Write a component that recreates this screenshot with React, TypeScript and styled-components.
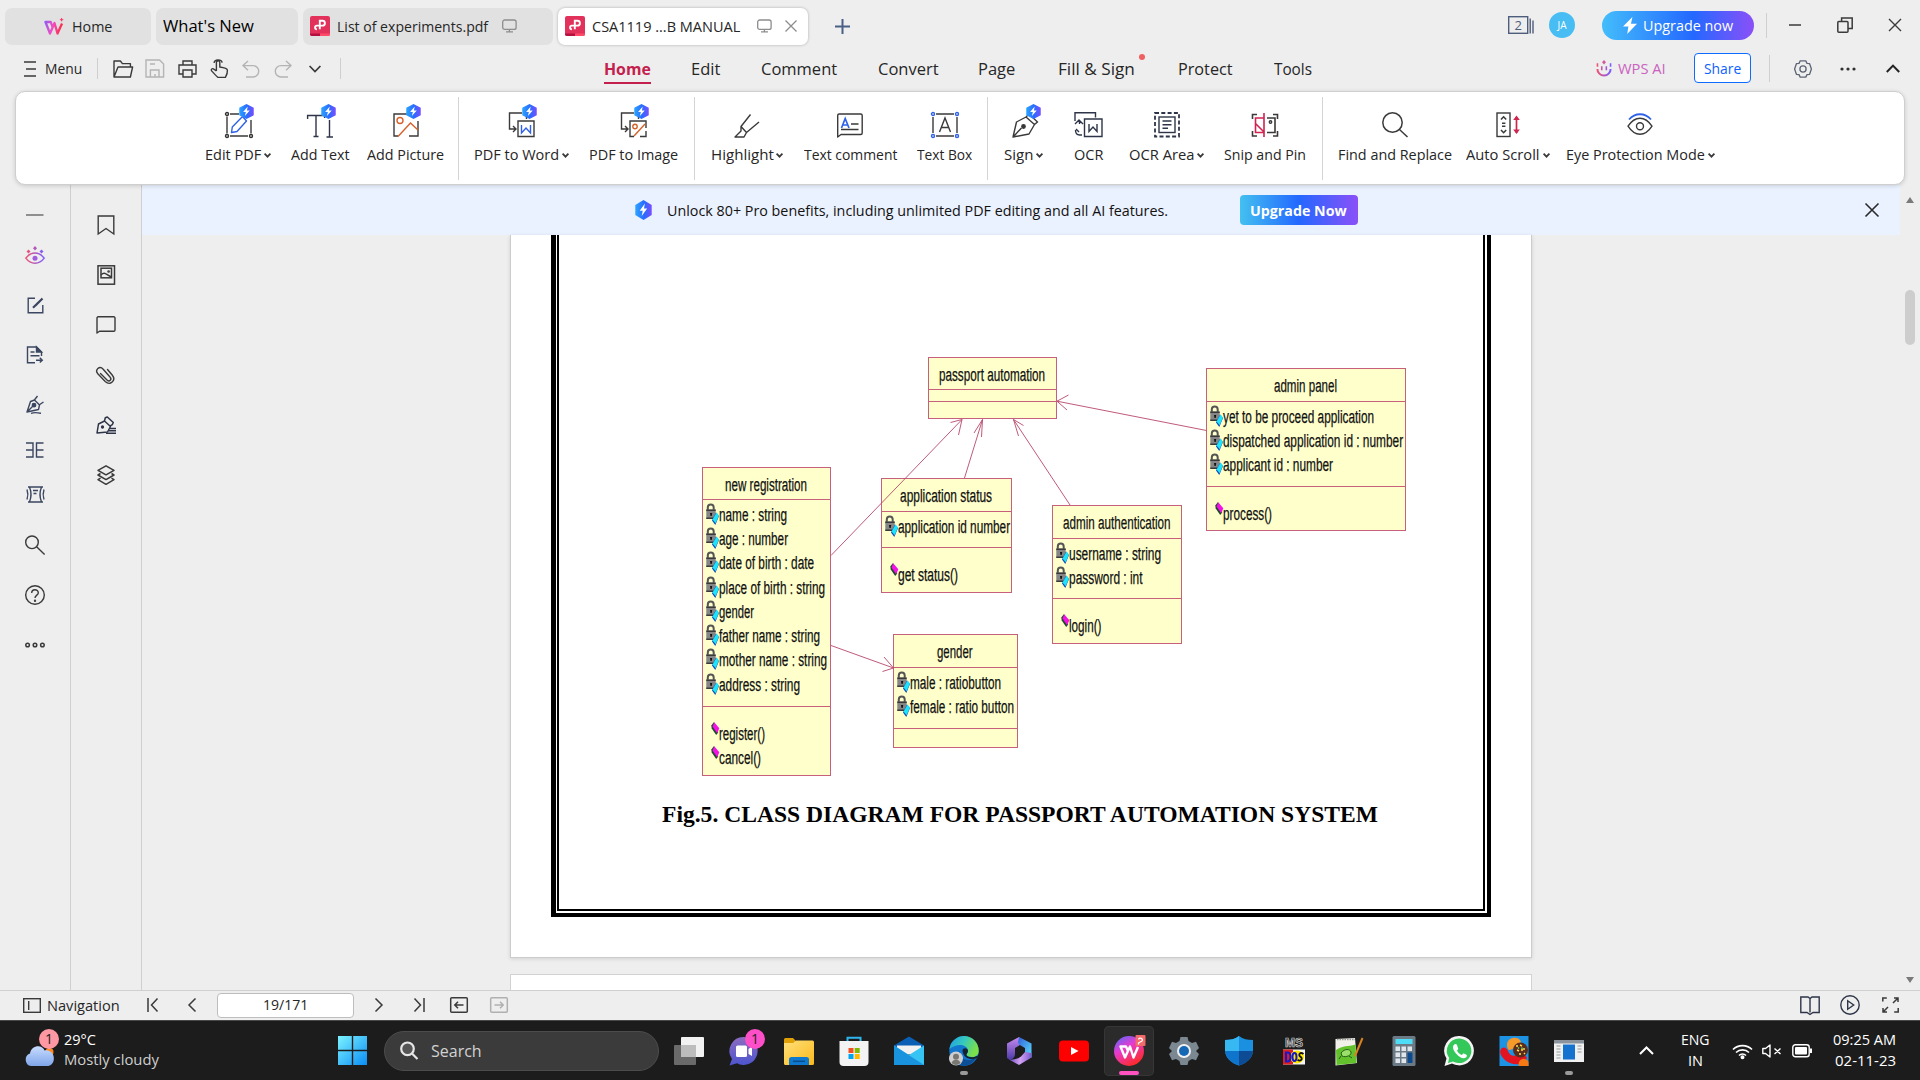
import React, { ReactNode, useLayoutEffect, useRef, useState } from 'react';
import styled, { createGlobalStyle } from 'styled-components';

const Global = createGlobalStyle`
  * { box-sizing: border-box; }
  html, body { margin: 0; padding: 0; overflow: hidden; background: #eeeeee; }
  body { font-family: "Open Sans", "Noto Sans", sans-serif; color: #262626; }
  svg { display: block; flex: none; overflow: visible; }
`;

/* ---------- text with a fixed run length ---------- */

const Run = styled.span<{ $w: number }>`
  display: block;
  flex: none;
  width: ${p => p.$w}px;
  white-space: nowrap;
`;
const RunInner = styled.span`
  display: inline-block;
  white-space: pre;
  transform-origin: 0 50%;
`;

function Fit({ w, children }: { w: number; children: ReactNode }) {
  const ref = useRef<HTMLSpanElement>(null);
  const [scale, setScale] = useState(1);
  useLayoutEffect(() => {
    if (ref.current && ref.current.offsetWidth) setScale(w / ref.current.offsetWidth);
  }, [w, children]);
  return (
    <Run $w={w}>
      <RunInner ref={ref} style={{ transform: `scaleX(${scale})` }}>{children}</RunInner>
    </Run>
  );
}

/* ---------- icon helper ---------- */

type IconProps = { w: number; h: number; c?: string; s?: number; children: ReactNode };
function Ic({ w, h, c = '#3a3a3a', s = 1.4, children }: IconProps) {
  return (
    <svg width={w} height={h} viewBox={`0 0 ${w} ${h}`} fill="none" stroke={c} strokeWidth={s}>
      {children}
    </svg>
  );
}

const GradientSheet = styled.svg`
  position: absolute;
`;

function Gradients() {
  return (
    <GradientSheet width="0" height="0">
      <defs>
        <linearGradient id="pro" x1="0" x2="1" y1="0" y2="0"><stop offset="0" stopColor="#2ba5ff" /><stop offset=".55" stopColor="#2a6bff" /><stop offset="1" stopColor="#7a4dff" /></linearGradient>
        <linearGradient id="wps" gradientUnits="userSpaceOnUse" x1="0" x2="20" y1="0" y2="5"><stop offset="0" stopColor="#7a5cff" /><stop offset=".5" stopColor="#f04fc4" /><stop offset="1" stopColor="#ff2a3c" /></linearGradient>
        <linearGradient id="wpsDisc" x1="0" x2=".6" y1="0" y2="1"><stop offset="0" stopColor="#4a6cff" /><stop offset=".45" stopColor="#e53bd0" /><stop offset="1" stopColor="#ff2a2a" /></linearGradient>
        <linearGradient id="eye" x1="0" x2="1" y1="0" y2="0"><stop offset="0" stopColor="#ee5572" /><stop offset="1" stopColor="#7c5cff" /></linearGradient>
        <linearGradient id="win" gradientUnits="userSpaceOnUse" x1="0" x2="29" y1="0" y2="29"><stop offset="0" stopColor="#7cf3ff" /><stop offset="1" stopColor="#0a8df5" /></linearGradient>
        <linearGradient id="cloud" x1="0" x2="0" y1="0" y2="1"><stop offset="0" stopColor="#c9dcff" /><stop offset="1" stopColor="#7fa6ea" /></linearGradient>
        <linearGradient id="chat" x1="0" x2="0" y1="0" y2="1"><stop offset="0" stopColor="#8d6bc0" /><stop offset="1" stopColor="#4c55cf" /></linearGradient>
        <linearGradient id="folder" x1="0" x2="1" y1="0" y2="1"><stop offset="0" stopColor="#ffe07a" /><stop offset="1" stopColor="#fbb91c" /></linearGradient>
        <linearGradient id="edgeTop" x1="0" x2="1" y1="0" y2=".4"><stop offset="0" stopColor="#1c9be8" /><stop offset=".5" stopColor="#35c8c0" /><stop offset="1" stopColor="#7be04a" /></linearGradient>
        <linearGradient id="hexA" x1="0" x2="0" y1="0" y2="1"><stop offset="0" stopColor="#c88af0" /><stop offset="1" stopColor="#4a3aa8" /></linearGradient>
        <linearGradient id="hexB" x1="0" x2="1" y1="0" y2="1"><stop offset="0" stopColor="#2f5fd8" /><stop offset="1" stopColor="#5fe0ff" /></linearGradient>
        <linearGradient id="hexC" x1="0" x2="1" y1="0" y2="0"><stop offset="0" stopColor="#6a4cc0" /><stop offset=".5" stopColor="#d3a2f4" /><stop offset="1" stopColor="#7a58cc" /></linearGradient>
      </defs>
    </GradientSheet>
  );
}

const bolt = 'M8.4 2.6L4 8h2.6l-.9 4 4.7-5.6H7.7z';

/* ---------- title bar ---------- */

const Screen = styled.div`
  width: 1920px;
  height: 1080px;
  display: flex;
  flex-direction: column;
  background: #eeeeee;
  overflow: hidden;
`;
const TitleBar = styled.header`
  height: 53px;
  flex: none;
  display: flex;
  align-items: center;
  padding-left: 5px;
  font-size: 15px;
`;
const Tab = styled.div<{ $w: number; $pad: number; $active?: boolean; $gap?: number }>`
  width: ${p => p.$w}px;
  height: 37px;
  margin-right: ${p => p.$gap ?? 5}px;
  padding: 0 0 1px ${p => p.$pad}px;
  display: flex;
  align-items: center;
  border-radius: 7px;
  background: ${p => (p.$active ? '#ffffff' : '#e1e1e1')};
  box-shadow: ${p => (p.$active ? '0 0 3px rgba(0,0,0,.28)' : 'none')};
`;
const Gap = styled.i<{ $w: number }>`
  flex: 0 0 ${p => p.$w}px;
`;
const Grow = styled.i`
  flex: 1;
`;
const NewTitle = styled.span`
  font-size: 16px;
  color: #000;
`;
const WindowTools = styled.div`
  display: flex;
  align-items: center;
  height: 32px;
  margin-top: -3px;
`;
const Avatar = styled.span`
  width: 26px;
  height: 26px;
  border-radius: 50%;
  background: #47bdf3;
  color: #fff;
  font-size: 10px;
  display: flex;
  align-items: center;
  justify-content: center;
`;
const UpgradePill = styled.span`
  width: 152px;
  height: 29px;
  border-radius: 15px;
  display: flex;
  align-items: center;
  padding-left: 20px;
  color: #fff;
  font-size: 15px;
  background: linear-gradient(90deg, #43bdfb, #2468ff 60%, #8a50f8);
`;
const VLine = styled.i<{ $h: number }>`
  flex: 0 0 1px;
  height: ${p => p.$h}px;
  background: #cfcfcf;
`;

const PdfLogo = () => (
  <svg width="20" height="20" viewBox="0 0 20 20">
    <rect width="20" height="20" rx="2" fill="#e2325c" />
    <path d="M0 17.6h10V20H2a2 2 0 0 1-2-2z" fill="#b5103f" />
    <path d="M10 17.6h10V18a2 2 0 0 1-2 2h-8z" fill="#ff4a68" />
    <path d="M9.800 13.200V4.800h2.700a2.400 2.400 0 0 1 0 4.800H6.900a1.800 1.800 0 0 0 0 3.600" fill="none" stroke="#fff" strokeWidth="1.900" />
  </svg>
);
const Monitor = () => (
  <Ic w={15} h={14} c="#8d8d8d" s={1.3}><rect x=".7" y="1" width="13.4" height="9.4" rx="2" /><path d="M7.4 10.4v2.4M4 12.8h7" /></Ic>
);

function TopBar() {
  return (
    <TitleBar>
      <Tab $w={146} $pad={39}>
        <svg width="20" height="17" viewBox="0 0 20 17" fill="none" stroke="url(#wps)" strokeWidth="2.300" strokeLinejoin="round">
          <path d="M8.500 9L6.800 4H1.500L6 15.500 10.500 5l3 10.500L18 5.500" /><path d="M17.600 0v3.400M15.900 1.700h3.400" strokeWidth="1" />
        </svg>
        <Gap $w={8} /><Fit w={40}>Home</Fit>
      </Tab>
      <Tab $w={142} $pad={7}><NewTitle><Fit w={91}>What's New</Fit></NewTitle></Tab>
      <Tab $w={250} $pad={7} $gap={5}>
        <PdfLogo /><Gap $w={7} /><Fit w={151}>List of experiments.pdf</Fit><Gap $w={14} /><Monitor />
      </Tab>
      <Tab $w={250} $pad={7} $active $gap={27}>
        <PdfLogo /><Gap $w={7} /><Fit w={148}>CSA1119 ...B MANUAL</Fit><Gap $w={17} /><Monitor /><Gap $w={13} />
        <Ic w={12} h={12} c="#8d8d8d" s={1.3}><path d="M.5.5l11 11M11.5.5l-11 11" /></Ic>
      </Tab>
      <Ic w={15} h={15} c="#4a5f86" s={2}><path d="M7.5 0v15M0 7.5h15" /></Ic>
      <Grow />
      <WindowTools>
        <Ic w={26} h={18} c="#4e5d7c"><rect x=".7" y=".7" width="19" height="16.6" /><path d="M22.2 2.4v15M25 4.4v13" />
          <text x="10.2" y="13.6" fontSize="13" textAnchor="middle" fill="#4e5d7c" stroke="none">2</text></Ic>
        <Gap $w={15} />
        <Avatar>JA</Avatar><Gap $w={27} />
        <UpgradePill>
          <svg width="16" height="17" viewBox="0 0 16 17" fill="#fff"><path d="M10.4 0L1 9.6h5.4L5.2 17 15 6.8H9z" /></svg>
          <Gap $w={5} /><Fit w={90}>Upgrade now</Fit>
        </UpgradePill>
        <Gap $w={12} /><VLine $h={25} /><Gap $w={22} />
        <Ic w={12} h={16} s={1.5}><path d="M0 8h12" /></Ic><Gap $w={36} />
        <Ic w={16} h={16} s={1.5}><path d="M4.6 4V1h10.6v10.6H11" /><rect x=".8" y="4.4" width="10.2" height="10.8" rx="1" /></Ic>
        <Gap $w={36} />
        <Ic w={12} h={12} s={1.4}><path d="M0 0l12 12M12 0L0 12" /></Ic><Gap $w={19} />
      </WindowTools>
    </TitleBar>
  );
}

/* ---------- menu row ---------- */

const MenuRow = styled.nav`
  height: 31px;
  flex: none;
  display: flex;
  align-items: center;
  padding-left: 24px;
  font-size: 15px;
`;
const TextUp = styled.span`
  margin-top: -2px;
`;
const NavItem = styled.span<{ $gap: number; $active?: boolean }>`
  position: relative;
  margin-left: ${p => p.$gap}px;
  height: 31px;
  line-height: 31px;
  font-size: 16.5px;
  font-weight: ${p => (p.$active ? 700 : 400)};
  color: ${p => (p.$active ? '#c4204d' : '#262626')};
  border-bottom: ${p => (p.$active ? '2px solid #c4204d' : 'none')};
`;
const RedDot = styled.i`
  position: absolute;
  right: -10px;
  top: 1px;
  width: 6px;
  height: 6px;
  border-radius: 50%;
  background: #f06060;
`;
const AiLabel = styled.span`
  margin-top: -2px;
  font-size: 15px;
  color: #ca62bf;
`;
const ShareButton = styled.span`
  width: 57px;
  height: 30px;
  margin-top: -1px;
  border: 1.5px solid #0d6bff;
  border-radius: 4px;
  background: #fff;
  color: #0d5fff;
  display: flex;
  align-items: center;
  justify-content: center;
`;

const navItems: [string, number, number][] = [
  ['Home', 263, 47], ['Edit', 40, 29], ['Comment', 41, 76], ['Convert', 41, 61], ['Page', 39, 37],
  ['Fill & Sign', 43, 77], ['Protect', 43, 55], ['Tools', 41, 38],
];

function Menu() {
  return (
    <MenuRow>
      <Ic w={12} h={16} s={1.5}><path d="M0 1h12M2 8h10M0 15h12" /></Ic>
      <Gap $w={9} /><TextUp><Fit w={37}>Menu</Fit></TextUp><Gap $w={15} /><VLine $h={21} /><Gap $w={15} />
      <Ic w={20} h={18}><path d="M1 17V1h6.4l2 2.6h8V7M1 17L5 7h14.600L17.400 17z" strokeLinejoin="round" /></Ic><Gap $w={12} />
      <Ic w={20} h={19} c="#b4b4b4"><path d="M1 1h13.6L18.6 5v13H1zM5.4 18v-7h8.6v7M5 5h5M10 18v-3" /></Ic><Gap $w={13} />
      <Ic w={19} h={18}><path d="M5 5V1h9v4M5 14H1V5h17v9h-4" /><path d="M5 10h9v7H5z" /></Ic><Gap $w={13} />
      <Ic w={19} h={19}><path d="M6.4 12V3.6a1.7 1.7 0 0 1 3.4 0V8c3 .4 7.4 1 7.6 3.2.2 2.200 0 3.800-2 7.200H8C6 16.600 3.600 14 1.400 11.600c-.6-1.800 1.400-2.600 2.800-1.200L6.400 12M4 3.800c.6-3.800 7.200-4 8.200-.2" /></Ic><Gap $w={13} />
      <Ic w={18} h={18} c="#b4b4b4"><path d="M6 1L1 5.600l5 4.600M1 5.600h10a5.700 5.700 0 0 1 0 11.400H4" /></Ic><Gap $w={14} />
      <Ic w={18} h={18} c="#b4b4b4"><path d="M12 1l5 4.600-5 4.600M17 5.600H7A5.700 5.700 0 0 0 7 17h7" /></Ic><Gap $w={17} />
      <Ic w={12} h={8} s={1.7}><path d="M.6 1L6 6.600 11.400 1" /></Ic><Gap $w={19} /><VLine $h={21} />
      {navItems.map(([label, gap, w], i) => (
        <NavItem key={label} $gap={gap} $active={i === 0}>
          <Fit w={w}>{label}</Fit>
          {label === 'Fill & Sign' && <RedDot />}
        </NavItem>
      ))}
      <Grow />
      <Ic w={16} h={17} c="url(#eye)" s={2}>
        <path d="M1.400 9a6.600 6.600 0 0 0 13.200 0" /><path d="M5.700 7v2.600h.1V7zM10.300 7v2.600h.1V7zM1.400 4v2h.1V4zM14.500 4v2h.1V4z" strokeWidth="1.500" /><path d="M8 0l2 2.300-2 2.300-2-2.300z" fill="#d45a9a" stroke="none" />
      </Ic>
      <Gap $w={6} /><AiLabel><Fit w={48}>WPS AI</Fit></AiLabel><Gap $w={28} />
      <ShareButton><Fit w={37}>Share</Fit></ShareButton>
      <Gap $w={18} /><VLine $h={27} /><Gap $w={24} />
      <Ic w={18} h={18} c="#5c6474" s={1.3}>
        <path d="M6.200.9h5.600l1.200 2.500 2.600.3L17.400 9l-1.800 5.300-2.600.3-1.200 2.500H6.200L5 14.600l-2.600-.3L.6 9l1.800-5.300L5 3.400z" strokeLinejoin="round" /><circle cx="9" cy="9" r="3.100" />
      </Ic>
      <Gap $w={28} />
      <svg width="16" height="4" fill="#2f2f2f"><circle cx="2" cy="2" r="1.600" /><circle cx="8" cy="2" r="1.600" /><circle cx="14" cy="2" r="1.600" /></svg>
      <Gap $w={30} />
      <Ic w={14} h={9} s={2} c="#222"><path d="M.8 8L7 1.600 13.200 8" /></Ic><Gap $w={20} />
    </MenuRow>
  );
}

/* ---------- ribbon ---------- */

const RibbonBar = styled.section`
  position: relative;
  z-index: 2;
  height: 94px;
  flex: none;
  margin: 7px 15px 0;
  display: flex;
  background: #fff;
  border: 1px solid #cfcfcf;
  border-radius: 10px;
  box-shadow: 0 1px 4px rgba(0, 0, 0, 0.16);
`;
const Tool = styled.div<{ $gap: number; $w: number }>`
  margin-left: ${p => p.$gap}px;
  width: ${p => p.$w}px;
  padding-top: 19px;
  display: flex;
  flex-direction: column;
  align-items: center;
  font-size: 14.5px;
`;
const ToolIcon = styled.span<{ $dx: number }>`
  position: relative;
  width: 28px;
  height: 28px;
  margin-left: ${p => p.$dx * 2}px;
`;
const ProBadge = styled.span`
  position: absolute;
  left: 14px;
  top: -7px;
`;
const ToolLabel = styled.span`
  display: flex;
  align-items: center;
  gap: 3px;
  margin-top: 6px;
  line-height: 20px;
`;
const Divider = styled.i<{ $gap: number }>`
  flex: 0 0 1px;
  margin: 5px 0 4px ${p => p.$gap}px;
  background: #d4d4d4;
`;

const Hex = ({ w = 15, h = 15 }: { w?: number; h?: number }) => (
  <svg width={w} height={h} viewBox="0 0 14.500 15" preserveAspectRatio="none">
    <path d="M7.250 0l7 3.800v7.400l-7 3.800-7-3.800V3.800z" fill="url(#pro)" /><path d={bolt} fill="#fff" />
  </svg>
);

const B = '#2f62e8';
const O = '#d4622c';
const N = '#2e3548';
const corners = (c: string) => (
  <g stroke={c}><circle cx="2" cy="3" r="1.500" /><circle cx="26" cy="3" r="1.500" /><circle cx="2" cy="25" r="1.500" /><circle cx="26" cy="25" r="1.500" /></g>
);
const art: Record<string, ReactNode> = {
  edit: <Ic w={28} h={28}>{corners('#333')}<path d="M5 3h9M2 5.500v17M5 25h18M26 9v13.500" /><path d="M6.500 21.500l.8-5.500L17.500 5.500l4 4.500L12 20.500z" stroke={B} strokeLinejoin="round" /></Ic>,
  text: <Ic w={28} h={28} c={N}><path d="M.6 8V4.500h17V7M9 4.500v21M6.500 25.500h5M22.500 9v17M19.500 26h6.500M18 4.500h3" /></Ic>,
  picture: <Ic w={28} h={28}><path d="M15 3H2v22h4M26 10v15h-9" /><circle cx="8" cy="9.500" r="3" stroke={O} /><path d="M6 25.500L18.500 12l7.500 7" stroke={O} /></Ic>,
  word: <Ic w={28} h={28}><path d="M14 2H1.500v16H8M5 15l3 3-3 3M18 2h.5v6M10 10h16v15.500H10z" /><path d="M13.500 14v8l4.500-5 4.500 5v-8" stroke={B} /></Ic>,
  image: <Ic w={28} h={28}><path d="M14 2H1.500v16H8M5 15l3 3-3 3M18 2h.5v6M26 17v-7H10v15.500h4M20 25.500h6V20" /><circle cx="15" cy="15.500" r="2.200" stroke={O} /><path d="M14 25l11-12" stroke={O} /></Ic>,
  highlight: <Ic w={28} h={28}><path d="M17.500 3.500L8 15.500l5.500 6L26 11M8 15.500v4.500L2 26h9l2.500-4.500" strokeLinejoin="round" /></Ic>,
  comment: <Ic w={28} h={28}><path d="M1.700 26V4.500a1.500 1.500 0 0 1 1.500-1.500h21.500a1.500 1.500 0 0 1 1.500 1.500V22a1.500 1.500 0 0 1-1.500 1.500H5z" strokeLinejoin="round" /><path d="M5.500 17l3.700-9.500L13 17M7 14h4.500" stroke={B} strokeWidth="1.700" /><path d="M15 13h7.500M5 18.500h17.500" /></Ic>,
  box: <Ic w={28} h={28}>{corners(B)}<path d="M5 3h18M5 25h18M2 6v16M26 6v16M8.500 21L14 7l5.500 14M10.500 16.500h7" /></Ic>,
  sign: <Ic w={28} h={28}><path d="M1 26l3.500-15L14 6l8.500 7.500L17 23 1 26l8.500-9M14 6l3-3 8.500 8-3 2.500" strokeLinejoin="round" /><circle cx="11.500" cy="15.500" r="1.700" fill="#333" /></Ic>,
  ocr: <Ic w={28} h={28} c={N}><path d="M0 10V1.700h20.500V6.500M7 24H4.500c-3 0-4-2-4-5M0 13l4-4 4 4M4.500 9.500V13M1 18l3 3M9.500 8H27v17.500H9.500z" /><path d="M14 13v7.500l4-4.500 4 4.500V13" /></Ic>,
  area: <Ic w={28} h={28} c={N}><path d="M2 2h24v23.500H2z" strokeDasharray="4 2.300" strokeWidth="1.800" /><rect x="6" y="6" width="16" height="15.500" /><path d="M9.500 10h9M9.500 13.700h9M9.500 17.300h5.500" strokeWidth="1.600" /></Ic>,
  snip: <Ic w={28} h={28}><path d="M1.500 8V3.500H6M1.500 20v5H6M26.500 8V3.500H22M26.500 20v5H22M16 7h8v14.500h-8" strokeWidth="1.600" /><circle cx="19.500" cy="11" r="1.200" /><path d="M13 2v24M13 7H4.500v14.500H13M4.500 12.500l9 9" stroke="#cf2350" strokeWidth="1.600" /></Ic>,
  find: <Ic w={28} h={28} s={1.5}><circle cx="11.500" cy="11.500" r="9.700" /><path d="M18.500 18.500l8 7.500" /></Ic>,
  scroll: <Ic w={28} h={28}><rect x="3" y="2" width="13" height="23.500" /><path d="M7 8.500l2.600-2.700 2.600 2.700M7 19l2.600 2.700 2.600-2.700M8 12.200h3.400M8 15.200h3.400" strokeWidth="1.600" /><path d="M22.500 6v16" stroke="#d0254f" strokeWidth="1.700" /><path d="M19.200 9l3.300-4.500L25.800 9zM19.200 18.500l3.300 4.500 3.300-4.500z" fill="#d0254f" stroke="none" /></Ic>,
  eyep: <Ic w={28} h={28}><path d="M3 8.500C9 1.500 19 1.500 25 8.500" stroke={B} strokeWidth="1.800" /><path d="M2 15.200C9 4.500 19 4.500 26 15.200 19 26 9 26 2 15.200z" strokeLinejoin="round" /><circle cx="14" cy="15.300" r="3.500" /></Ic>,
};

type ToolSpec = { n: string; k: string; g: number; w: number; caret?: boolean; pro?: boolean; dx?: number };
const toolGroups: { end: number; tools: ToolSpec[] }[] = [
  { end: 14, tools: [{ n: 'Edit PDF', k: 'edit', g: 189, w: 66, caret: true, pro: true, dx: 1 }, { n: 'Add Text', k: 'text', g: 20, w: 59, pro: true, dx: 0.5 }, { n: 'Add Picture', k: 'picture', g: 16.5, w: 77, pro: true, dx: 0.5 }] },
  { end: 15.5, tools: [{ n: 'PDF to Word', k: 'word', g: 15.5, w: 95, caret: true, pro: true, dx: 0.5 }, { n: 'PDF to Image', k: 'image', g: 20, w: 89.5, pro: true, dx: 0.5 }] },
  { end: 15, tools: [{ n: 'Highlight', k: 'highlight', g: 15.5, w: 72.5, caret: true }, { n: 'Text comment', k: 'comment', g: 20.5, w: 93 }, { n: 'Text Box', k: 'box', g: 20.5, w: 55 }] },
  { end: 15.5, tools: [{ n: 'Sign', k: 'sign', g: 16, w: 39, caret: true, pro: true, dx: 2 }, { n: 'OCR', k: 'ocr', g: 31, w: 29 }, { n: 'OCR Area', k: 'area', g: 26, w: 75, caret: true }, { n: 'Snip and Pin', k: 'snip', g: 20, w: 82 }] },
  { end: 0, tools: [{ n: 'Find and Replace', k: 'find', g: 15, w: 114 }, { n: 'Auto Scroll', k: 'scroll', g: 14, w: 84, caret: true }, { n: 'Eye Protection Mode', k: 'eyep', g: 16, w: 149, caret: true }] },
];

function Ribbon() {
  return (
    <RibbonBar>
      {toolGroups.map((group, i) => (
        <React.Fragment key={i}>
          {group.tools.map(t => (
            <Tool key={t.n} $gap={t.g} $w={t.w}>
              <ToolIcon $dx={t.dx ?? 0}>{art[t.k]}{t.pro && <ProBadge><Hex /></ProBadge>}</ToolIcon>
              <ToolLabel>
                <Fit w={t.caret ? t.w - 10 : t.w}>{t.n}</Fit>
                {t.caret && <Ic w={7} h={5} s={1.8}><path d="M.6.7L3.500 3.700 6.400.7" /></Ic>}
              </ToolLabel>
            </Tool>
          ))}
          {group.end > 0 && <Divider $gap={group.end} />}
        </React.Fragment>
      ))}
    </RibbonBar>
  );
}

/* ---------- side rails ---------- */

const Workspace = styled.main`
  flex: none;
  height: 805px;
  display: flex;
  overflow: hidden;
`;
const Rail = styled.aside`
  flex: 0 0 71px;
  border-right: 1px solid #cfcfcf;
  display: flex;
  flex-direction: column;
  align-items: center;
`;
const RailItem = styled.div<{ $top: number }>`
  height: 20px;
  margin-top: ${p => p.$top}px;
  display: flex;
  align-items: center;
  justify-content: center;
`;
const L = '#3b4660';

const leftRail: [number, ReactNode][] = [
  [20, <Ic w={18} h={2} c="#8f8f8f" s={2}><path d="M0 1h17.500" /></Ic>],
  [20, <Ic w={20} h={18} c="url(#eye)"><path d="M.8 12.200c5-7 13.400-7 18.400 0-5 6.800-13.400 6.800-18.400 0z" /><circle cx="10" cy="12.200" r="2.500" fill="#a25ce0" stroke="none" /><path d="M10 0l2 2.300-2 2.300-2-2.300zM3.500 3.500l2 2-2 2-2-2zM16.500 3.500l2 2-2 2-2-2z" fill="url(#eye)" stroke="none" /></Ic>],
  [30, <Ic w={17} h={17} c={L}><path d="M8 1.200H1.200v14.600h14.600V8" /><path d="M6 10.800L15.500 1.500M8.500 8.500l7-7" strokeWidth="2.200" /></Ic>],
  [30, <Ic w={18} h={18} c={L}><path d="M9 16.800H1.500V1h9l5 5v4M4.500 6h4M4.500 9.800h9" /><path d="M10.500 1v5h5z" fill={L} /><path d="M10 14.200h6M13.800 11.800l2.500 2.400-2.500 2.400" /></Ic>],
  [30, <Ic w={18} h={18} c={L}><path d="M1 16L4.500 5.500 8.500 4l5 5-1 4.500L1 16l6-6M8 4.500L11.500 0M13 9l4.500-3M5 17.300c4-1.300 7-.6 10 0" strokeLinejoin="round" /><circle cx="8" cy="9.200" r="1.700" fill={L} /></Ic>],
  [25, <Ic w={18} h={16} c={L}><path d="M0 1h7v14H0M0 8h7M17.500 1h-7v14h7M10.500 8h7" /></Ic>],
  [24, <Ic w={19} h={17} c={L}><path d="M2 1h15M2 16h15M3.500 1c2 5 2 10 0 15M15.500 1c-2 5-2 10 0 15M1 3.500c1.200 3.500 1.200 6.500 0 10M18 3.500c-1.200 3.500-1.200 6.500 0 10M7 4.500h5M7.500 7.500h3" /></Ic>],
  [31, <Ic w={20} h={20} s={1.4}><circle cx="7" cy="7.300" r="6.300" /><path d="M11.600 11.800l8 7.800" /></Ic>],
  [30, <Ic w={20} h={20} s={1.4}><circle cx="10" cy="10" r="9.300" /><path d="M6.700 8c0-4.300 6.600-4.300 6.600 0 0 2-3.300 2.400-3.300 5" /><circle cx="10" cy="15.700" r=".5" /></Ic>],
  [30, <Ic w={20} h={6} s={1.5}><circle cx="2.600" cy="3" r="1.800" /><circle cx="10" cy="3" r="1.800" /><circle cx="17.400" cy="3" r="1.800" /></Ic>],
];
const rightRail: [number, ReactNode][] = [
  [30, <Ic w={18} h={20}><path d="M1.200 1h15.600v18l-7.800-5.500L1.200 19z" /></Ic>],
  [30, <Ic w={18} h={20} s={1.5}><rect x="1" y=".8" width="16.500" height="18.400" /><rect x="4" y="3.200" width="10.500" height="9.600" /><path d="M4 10c4-4 5 0 10.500 2" /><circle cx="11.600" cy="6.500" r=".6" /></Ic>],
  [30, <Ic w={20} h={18}><path d="M1 17V2a1.200 1.200 0 0 1 1.200-1.200h15.600A1.200 1.200 0 0 1 19 2v12a1.200 1.200 0 0 1-1.200 1.200H3.500z" strokeLinejoin="round" /></Ic>],
  [30, <Ic w={20} h={18}><path d="M4.500 7.500L11 14c2.500 2.300 5.300-.5 3-3L7.200 3.200C3.500-.7-1.500 3.800 1.800 7.700l7.400 7.800c5 4.600 11.300-1 7-6.500L11.500 3.500" strokeLinecap="round" /></Ic>],
  [30, <Ic w={20} h={18} c={N} s={1.5}><path d="M1 17L2.500 8 8.500 5l6 5.500-3 5.500zM8.500 5l.8-3.200 2-.8 6 5.500-1 2.200-2.500 1.500" strokeLinejoin="round" /><circle cx="6.500" cy="11" r=".9" fill={N} /><path d="M14 12.500h6M12.500 14.800h7.500M10 17.200h10" /></Ic>],
  [30, <Ic w={18} h={20} s={1.5}><path d="M9 .8l8 4.500-8 4.500-8-4.500zM3.500 8.500L1 10l8 4.600L17 10l-2.500-1.500M3.500 13.200L1 14.700 9 19.300l8-4.600-2.500-1.500" strokeLinejoin="round" /></Ic>],
];

/* ---------- document ---------- */

const Viewer = styled.div`
  flex: 0 0 1758px;
  display: flex;
  flex-direction: column;
`;
const Banner = styled.div`
  height: 50px;
  flex: none;
  display: flex;
  align-items: center;
  padding-left: 493px;
  background: #ebf2ff;
  color: #111;
  font-size: 15px;
`;
const BannerButton = styled.span`
  width: 118px;
  height: 30px;
  border-radius: 4px;
  display: flex;
  align-items: center;
  justify-content: center;
  padding-right: 1px;
  color: #fff;
  font-weight: 700;
  background: linear-gradient(90deg, #43c0f0, #2468ff 50%, #8a50f8);
`;
const Page = styled.article`
  width: 1022px;
  height: 723px;
  flex: none;
  margin-left: 368px;
  padding-left: 40px;
  background: #fff;
  border: 1px solid #cccccc;
  border-top: 0;
  box-shadow: 0 1px 4px rgba(0, 0, 0, 0.12);
`;
const NextPage = styled.article`
  flex: none;
  width: 1022px;
  height: 40px;
  margin: 16px 0 0 368px;
  background: #fff;
  border: 1px solid #d2d2d2;
`;
const OuterFrame = styled.div`
  width: 940px;
  height: 682px;
  border: solid #000;
  border-width: 0 4px 4px 5px;
  padding: 0 2px 2px 1px;
`;
const InnerFrame = styled.div`
  height: 676px;
  border: solid #000;
  border-width: 0 2px 2px;
`;
const Canvas = styled.div`
  position: relative;
  height: 565px;
`;
const Caption = styled.p`
  margin: 0 0 0 102.5px;
  font: bold 24px/28px "Liberation Serif", serif;
  color: #000;
`;

const ORIGIN = { x: 559, y: 235 };
const UmlBox = styled.div<{ $x: number; $y: number; $w: number; $h: number }>`
  position: absolute;
  left: ${p => p.$x - ORIGIN.x}px;
  top: ${p => p.$y - ORIGIN.y}px;
  width: ${p => p.$w}px;
  height: ${p => p.$h}px;
  display: flex;
  flex-direction: column;
  background: #ffffcc;
  border: 1px solid #c6607c;
  color: #111;
  font: 18px/24.300px "Liberation Sans", Arial, sans-serif;
  -webkit-text-stroke: 0.25px #111;
`;
const UmlTitle = styled.div<{ $h: number }>`
  flex: 0 0 ${p => p.$h}px;
  padding: 5px 1.5px 0 0;
  display: flex;
  justify-content: center;
  border-bottom: 1px solid #c6607c;
`;
const UmlAttrs = styled.div<{ $h: number }>`
  flex: 0 0 ${p => p.$h}px;
  padding: 2.7px 0 0 3px;
  border-bottom: 1px solid #c6607c;
`;
const UmlMethods = styled.div`
  padding: 15px 0 0 8px;
`;
const UmlRow = styled.div<{ $method?: boolean }>`
  height: 24.300px;
  display: flex;
  margin-left: ${p => (p.$method ? -0.5 : 0)}px;
`;
const UmlArrows = styled.svg`
  position: absolute;
  left: 0;
  top: 0;
`;

const Lock = () => (
  <svg width="13" height="22" viewBox="0 0 13 22">
    <path d="M1.800 9V4.500C1.800.5 7.700.5 7.700 4.500V9" fill="none" stroke="#555" strokeWidth="2" />
    <rect x=".3" y="6.500" width="9.400" height="9.500" fill="#868686" /><path d="M.3 6.500h9.400V8H.3zM.3 14.500h9.400V16H.3z" fill="#3a3a3a" />
    <path d="M4 10h2.200l-.5 3H4.500z" fill="#111" />
    <path d="M10 9.500l3 3.500-3.700 9L6 17.500z" fill="#0b49b5" /><path d="M10.600 9.500l2.400 3-3.300 7.800-3.200-3.800z" fill="#1ce4ff" />
  </svg>
);
const Diamond = () => (
  <svg width="8.500" height="14" viewBox="0 0 8.500 14">
    <path d="M3 0L.3 3.500l.4 3L5.200 13l2-2.500z" fill="#1a4a2a" /><path d="M3.200.3l5.100 6-2.100 5L1.500 4.500z" fill="#f411e6" />
  </svg>
);

type Uml = { x: number; y: number; w: number; h: number; th: number; ah: number; title: [string, number]; attrs: [string, number][]; methods: [string, number][] };
const classes: Uml[] = [
  { x: 928, y: 357, w: 129, h: 62, th: 32, ah: 12, title: ['passport automation', 106], attrs: [], methods: [] },
  {
    x: 702, y: 467, w: 129, h: 309, th: 32, ah: 207, title: ['new registration', 82],
    attrs: [['name : string', 68], ['age : number', 69], ['date of birth : date', 95], ['place of birth : string', 106], ['gender', 35], ['father name : string', 101], ['mother name : string', 108], ['address : string', 81]],
    methods: [['register()', 46], ['cancel()', 42]],
  },
  { x: 881, y: 478, w: 131, h: 115, th: 33, ah: 36, title: ['application status', 92], attrs: [['application id number', 112]], methods: [['get status()', 60]] },
  { x: 893, y: 634, w: 125, h: 114, th: 33, ah: 61, title: ['gender', 35.5], attrs: [['male : ratiobutton', 91], ['female : ratio button', 104]], methods: [] },
  { x: 1052, y: 505, w: 130, h: 139, th: 33, ah: 60, title: ['admin authentication', 107.5], attrs: [['username : string', 92], ['password : int', 73.5]], methods: [['login()', 32.5]] },
  { x: 1206, y: 368, w: 200, h: 163, th: 33, ah: 85, title: ['admin panel', 63], attrs: [['yet to be proceed application', 151], ['dispatched application id : number', 180], ['applicant id : number', 110]], methods: [['process()', 49]] },
];

function Diagram() {
  return (
    <Canvas>
      {classes.map(c => (
        <UmlBox key={c.title[0]} $x={c.x} $y={c.y} $w={c.w} $h={c.h}>
          <UmlTitle $h={c.th}><Fit w={c.title[1]}>{c.title[0]}</Fit></UmlTitle>
          <UmlAttrs $h={c.ah}>{c.attrs.map(([t, w]) => <UmlRow key={t}><Lock /><Fit w={w}>{t}</Fit></UmlRow>)}</UmlAttrs>
          <UmlMethods>{c.methods.map(([t, w]) => <UmlRow key={t} $method><Diamond /><Fit w={w}>{t}</Fit></UmlRow>)}</UmlMethods>
        </UmlBox>
      ))}
      <UmlArrows width="922" height="565" viewBox="559 235 922 565" fill="none" stroke="#b8476a" strokeWidth="0.900">
        <path d="M831 555.500L962 419.500M950.500 422.500L962 419.500 958.500 435" />
        <path d="M964.500 478L982.500 419.500M974 433L982.500 419.500 981.500 437" />
        <path d="M1070 505L1013.500 419.500M1023.500 425.500L1013.500 419.500 1018.500 436" />
        <path d="M1206.500 430.500L1057 401.200M1068.500 395L1057 401.200 1067 410" />
        <path d="M831 645.500L893.500 668M884 657L893.500 668 882.500 671.500" />
      </UmlArrows>
    </Canvas>
  );
}

const ScrollTrack = styled.div`
  flex: 0 0 20px;
  display: flex;
  flex-direction: column;
  align-items: center;
  padding-top: 12px;
`;
const Thumb = styled.i`
  flex: none;
  width: 10px;
  height: 55px;
  margin: 87px 0 632px;
  border-radius: 5px;
  background: #cdcdcd;
`;

/* ---------- status bar ---------- */

const Status = styled.footer`
  height: 30px;
  flex: none;
  display: flex;
  align-items: center;
  padding: 0 0 1px 23px;
  border-top: 1px solid #cfcfcf;
  font-size: 15px;
`;
const PageInput = styled.span`
  width: 137px;
  height: 25px;
  display: flex;
  align-items: center;
  justify-content: center;
  background: #fff;
  border: 1px solid #bdbdbd;
  border-radius: 4px;
`;

function StatusBar() {
  return (
    <Status>
      <Ic w={18} h={15}><rect x=".7" y=".7" width="16.600" height="13.600" /><path d="M5.700 3v9" /></Ic><Gap $w={6} />
      <Fit w={73}>Navigation</Fit><Gap $w={27} />
      <Ic w={11} h={14} s={1.5}><path d="M1 0v14M10.500.5L4.500 7l6 6.500" /></Ic><Gap $w={30} />
      <Ic w={8} h={14} s={1.5}><path d="M7.500.5L1 7l6.500 6.500" /></Ic><Gap $w={21} />
      <PageInput><TextUp><Fit w={45}>19/171</Fit></TextUp></PageInput><Gap $w={21} />
      <Ic w={8} h={14} s={1.5}><path d="M.5.5L7 7 .5 13.500" /></Ic><Gap $w={31} />
      <Ic w={11} h={14} s={1.5}><path d="M10 0v14M.5.5l6 6.500-6 6.500" /></Ic><Gap $w={25} />
      <Ic w={18} h={16} s={1.5}><rect x=".7" y=".7" width="16.600" height="14.600" rx="1" /><path d="M13.500 8H5M8 4.800L4.800 8 8 11.200" /></Ic><Gap $w={22} />
      <Ic w={18} h={16} s={1.5} c="#b0b0b0"><rect x=".7" y=".7" width="16.600" height="14.600" rx="1" /><path d="M4.500 8H13M10 4.800L13.200 8 10 11.200" /></Ic>
      <Grow />
      <Ic w={20} h={19} c={N}><path d="M10 2.500L8 1H.8v15.500H7l3 2 3-2h6.200V1H12zM10 2.500v14" /></Ic><Gap $w={20} />
      <Ic w={20} h={20} c={N}><circle cx="10" cy="10" r="9.200" /><path d="M7.700 5.800v8.400l6-4.200z" /></Ic><Gap $w={22} />
      <Ic w={17} h={16} s={1.5}><path d="M.8 4.500V1h4M16.200 11v4h-4M11 6l5-5M12 1h4v4M6 10l-5 5M1 11v4h4" /></Ic><Gap $w={21} />
    </Status>
  );
}

/* ---------- taskbar ---------- */

const Taskbar = styled.footer`
  height: 60px;
  flex: none;
  display: flex;
  align-items: center;
  padding: 0 0 0 24px;
  background: #1c1c1c;
  border-top: 1px solid #484848;
  color: #fff;
  font-size: 14.500px;
`;
const Weather = styled.div`
  width: 314px;
  display: flex;
  gap: 5px;
  margin-top: -1px;
`;
const WeatherIcon = styled.span`
  position: relative;
  width: 35px;
  padding-top: 16px;
`;
const Bubble = styled.b<{ $x: number; $y: number; $c: string }>`
  position: absolute;
  left: ${p => p.$x}px;
  top: ${p => p.$y}px;
  width: 20px;
  height: 20px;
  border-radius: 50%;
  background: ${p => p.$c};
  color: #222;
  font: 400 14px/20px "Open Sans", sans-serif;
  text-align: center;
`;
const Stack = styled.div<{ $align?: string }>`
  display: flex;
  flex-direction: column;
  align-items: ${p => p.$align ?? 'flex-start'};
  line-height: 20.500px;
`;
const Muted = styled.span`
  color: #cfcfcf;
`;
const Search = styled.div`
  width: 275px;
  height: 40px;
  margin: 0 2px 0 17px;
  padding-left: 15px;
  display: flex;
  align-items: center;
  gap: 13px;
  border-radius: 20px;
  background: #3b3b3b;
  border: 1px solid #4c4c4c;
  color: #d2d2d2;
  font-size: 16px;
`;
const AppCell = styled.div<{ $active?: boolean }>`
  position: relative;
  flex: none;
  width: ${p => (p.$active ? 50 : 55)}px;
  height: 50px;
  margin: 0 ${p => (p.$active ? 2.5 : 0)}px;
  display: flex;
  align-items: center;
  justify-content: center;
  border-radius: 5px;
  background: ${p => (p.$active ? '#2b2b2b' : 'none')};
  box-shadow: ${p => (p.$active ? 'inset 0 0 0 1px #363636' : 'none')};
`;
const Running = styled.i<{ $active?: boolean }>`
  position: absolute;
  bottom: 1px;
  width: ${p => (p.$active ? 20 : 8)}px;
  height: 4px;
  border-radius: 2px;
  background: ${p => (p.$active ? '#ff52c0' : '#9a9a9a')};
`;

const P = ({ children }: { children: ReactNode }) => <svg width="30" height="30" viewBox="0 0 30 30">{children}</svg>;

const apps: { icon: ReactNode; badge?: boolean; active?: boolean; run?: boolean }[] = [
  { icon: <P><rect x="0" y="9" width="22" height="20" rx="1" fill="#6a6a6a" /><rect x="7" y="1" width="23" height="20" rx="1" fill="#f2f2f2" /><rect x="7" y="9" width="15" height="12" fill="#bdbdbd" /></P> },
  { badge: true, icon: <P><path d="M15 1a14 14 0 1 1-7 26.300L.5 29.500 3 23A14 14 0 0 1 15 1z" fill="url(#chat)" /><rect x="7" y="9.500" width="11" height="11.500" rx="1.500" fill="#fff" /><path d="M19.500 13l3.500-2.500v9.500L19.500 18z" fill="#fff" /></P> },
  { icon: <P><path d="M0 3.500A1.500 1.500 0 0 1 1.500 2H9l3 3h16v6H0z" fill="#e0a008" /><path d="M0 7h9l3-2.500h16.500A1.500 1.500 0 0 1 30 6v21.500a1.500 1.500 0 0 1-1.500 1.500h-27A1.500 1.500 0 0 1 0 27.500z" fill="url(#folder)" /><path d="M5 29v-5.500A2.500 2.500 0 0 1 7.500 21h15a2.500 2.500 0 0 1 2.500 2.500V29z" fill="#0e79cf" /><path d="M9 25.300h12" stroke="#0a4d8c" strokeWidth="1.500" /></P> },
  { icon: <P><path d="M8.500 6.500V1.700h13v4.800" fill="none" stroke="#2fb5ee" strokeWidth="2" /><path d="M.5 5h29v21a4 4 0 0 1-4 4h-21a4 4 0 0 1-4-4z" fill="#f3f3f3" /><rect x="9.500" y="12" width="5" height="5" fill="#f25022" /><rect x="15.700" y="12" width="5" height="5" fill="#7fba00" /><rect x="9.500" y="18" width="5" height="5" fill="#00a4ef" /><rect x="15.700" y="18" width="5" height="5" fill="#ffb900" /></P> },
  { icon: <P><path d="M0 9.500L15 .5l15 9V13H0z" fill="#0a5fb4" /><path d="M3 9.500h24v9H3z" fill="#f1f1f1" /><path d="M0 9.500l15 9.500 15-9.500V29H0z" fill="#35c4f4" /><path d="M0 9.500L30 29H0z" fill="#1a93de" /></P> },
  { run: true, icon: <P><circle cx="15" cy="15" r="14.700" fill="#1177cf" /><path d="M.4 13A14.700 14.700 0 0 1 29.700 15c0 4-3 6-6.700 6-3 0-5.500-1-5.500-2.200 0-1 1.500-1.500 1.500-4C19 9 9 6 .4 13z" fill="url(#edgeTop)" /><path d="M11 15c-1 7 6 12 16 7-3 6-9 8-13 7.700C7 27 6 19 11 15z" fill="#0d4f96" /><path d="M13.500 14.500c0-3 5.500-3 5.500.5 0 2-2 2.500-1.500 4.300C18.500 21.500 24 22 28 20l1 0-.8 2C22 25 14 22 13.500 14.500z" fill="#16222e" /><circle cx="7" cy="22.500" r="7" fill="#cfcfcf" /><circle cx="7" cy="20.700" r="3" fill="#7a7672" /><path d="M2.500 27c1-4.500 8-4.500 9 0-2.500 2.500-6.500 2.500-9 0z" fill="#7a7672" /></P> },
  { icon: <P><path d="M15 1L3 7.500v14.500l3 2c3-1 5-3 5-6v-6l8-5z" fill="url(#hexA)" /><path d="M15 1l12.500 6.500v14L21 19V12l-6-3.500-1-2z" fill="url(#hexB)" /><path d="M5 23.500L15 29l12.500-7.500V17L21 16l-4 4.500c-3 2.500-8 3.500-12 3z" fill="url(#hexC)" /></P> },
  { icon: <P><rect x="0" y="4.500" width="30" height="21" rx="4" fill="#ff0000" /><path d="M12 11l7.500 4-7.500 4z" fill="#fff" /></P> },
  { active: true, run: true, icon: <P><circle cx="15" cy="15" r="15" fill="url(#wpsDisc)" /><path d="M14 15L12 10.500H6.500L11 21.500 16 10.500l3.500 11L24 11" fill="none" stroke="#fff" strokeWidth="2.400" strokeLinejoin="round" /><rect x="21.500" y="-1" width="10" height="11" rx="1" fill="#f26a6a" /><path d="M24.500 8.500v-1.500l2.500-1.500M24.500 3.500a2 1.800 0 1 1 2.500 2.200" fill="none" stroke="#fff" strokeWidth="1.300" /></P> },
  { icon: <P><path d="M11.500 1h7l1 4 3.500 2 4-1.200L30 12l-3 3 3 3-3 6.200-4-1.200-3.500 2-1 4h-7l-1-4L7 23l-4 1.200L0 18l3-3-3-3 3-6.200L7 7l3.500-2z" fill="#7b8791" /><circle cx="15" cy="15" r="7" fill="#f0f0f0" /><circle cx="15" cy="15" r="5" fill="#1467b4" /></P> },
  { icon: <P><path d="M15 0c4 3 8.500 4 14 4v10c0 8-6 13-14 15.500C7 27 1 22 1 14V4c5.500 0 10-1 14-4z" fill="#1b8fe0" /><path d="M15 0v15H1V4c5.500 0 10-1 14-4z" fill="#37b8f3" /><path d="M1 15h14v14.500C8 27 1.500 22 1 15z" fill="#0f74cc" /><path d="M15 15h14c-.5 7-6 12-14 14.500z" fill="#0d4c94" /></P> },
  { icon: <P><text x="15" y="11" fontFamily="Liberation Sans" fontWeight="700" fontSize="12" textAnchor="middle" fill="#222" stroke="#d0d0d0" strokeWidth=".7">MS</text><rect x="4" y="13.500" width="22" height="15" fill="#f4f4f4" /><rect x="4" y="13.500" width="10" height="15" fill="#e02020" /><ellipse cx="18" cy="21" rx="7" ry="6.500" fill="#ffe800" /><path d="M7 16.500h1.500c4 0 4 9 0 9H7z" fill="none" stroke="#1818c8" strokeWidth="2.200" /><ellipse cx="15.500" cy="21" rx="2" ry="4" fill="none" stroke="#1818c8" strokeWidth="2" /><path d="M24.500 18c-3-2.500-6 .5-3 2.800s0 5-3 3" fill="none" stroke="#111" strokeWidth="1.800" /></P> },
  { icon: <P><path d="M1.500 3L21 2l2 25-21.500 2.500z" fill="#f1f1ea" /><path d="M2 14c7-5 12-3 19.500-5.500L22.500 27l-20 2z" fill="#63c22c" /><path d="M3 3.500h18" stroke="#999" strokeWidth="1.500" strokeDasharray="1.500 1" /><path d="M7 17c4-5 9-4 10-1s-5 6-9 4zM7 20l-2 3M15 20l3 2" stroke="#255c18" fill="#9be06a" /><path d="M28.500 2L21 20" stroke="#d98220" strokeWidth="2" /></P> },
  { icon: <P><rect x="3.500" y="0" width="23" height="30" rx="1.500" fill="#6c7a86" /><rect x="6.500" y="3" width="17" height="5" fill="#4fdcf6" /><g fill="#dfe5ea"><path d="M6.500 10.500H11v4.500H6.500zM12.500 10.500H17v4.500h-4.500zM18.500 10.500H23v4.500h-4.500zM6.500 16.500H11V21H6.500zM12.500 16.500H17V21h-4.500zM6.500 22.500H11V27H6.500zM12.500 22.500H17V27h-4.500z" /></g><rect x="18.500" y="16.500" width="5" height="10.500" fill="#0d4a8c" /></P> },
  { icon: <P><path d="M15.500 0A14.700 14.700 0 1 1 8 27.500L.5 30l2-7.500A14.700 14.700 0 0 1 15.500 0z" fill="#f4f4f4" /><path d="M15.500 2.500A12.300 12.300 0 1 1 9 25.500L4 27l1.200-5A12.300 12.300 0 0 1 15.500 2.500z" fill="#34c759" /><path d="M11 8c-3 1.500-2.500 5.500 1 9.500s7.500 6 10 4c1.500-1.500 1-2.500 0-3l-2.500-1.300-1.700 1.800c-2-.5-4-2.500-4.800-4.500l1.300-1.500L13 9c-.4-1-1-1.300-2-1z" fill="#fff" /></P> },
  { icon: <P><rect x=".5" y="0" width="29" height="30" fill="#1d93e4" /><path d="M8 9c0-8 10-9 13-5 2 3 0 6-3 7l-7 3c-2 0-3-2-3-5z" fill="#f5992a" /><path d="M1.500 14c1.500-4 6-3 7.500 1s4 5.500 8 4.500 9-2 11 2c-1 6-10 8.500-17 5.500S0 18 1.500 14z" fill="#e3141f" /><circle cx="21.500" cy="14" r="7.500" fill="#5b2c1c" /><path d="M17 10h2M21 9l2 1M25 12v2M18 14l2 1M22 14h2M20 18h2M25 17l1 1" stroke="#ffe24a" strokeWidth="1.400" /><path d="M19 11.500l1 1M23 11.500v1.500" stroke="#5ae070" strokeWidth="1.400" /><path d="M20 30a5 5 0 0 1 9.500-4v4z" fill="#f57a14" /></P> },
  { run: true, icon: <P><rect x="0" y="4" width="30" height="22" fill="#f1f1f1" /><path d="M0 4h30v3.500H0z" fill="#8b949c" /><rect x="9" y="8.500" width="12" height="15" fill="#1572cf" /><path d="M2.500 10h4M2.500 13h4M2.500 16h4M2.500 19h4M2.500 22h4M23.500 10h4M23.500 13h4M23.500 16h4" stroke="#999" strokeWidth="1.200" /></P> },
];

function Bar() {
  return (
    <Taskbar>
      <Weather>
        <WeatherIcon>
          <svg width="31" height="20" viewBox="0 0 31 20"><circle cx="25.500" cy="6" r="4" fill="#ff8a1e" /><path d="M7 20a6.500 6.500 0 0 1-1-12.500C7.500-2 19-1.500 20.500 4.500c6-1 10 4 9.300 9-.5 4-3 6.500-6.500 6.500z" fill="url(#cloud)" /></svg>
          <Bubble $x={15} $y={-1} $c="#ff98a2">1</Bubble>
        </WeatherIcon>
        <Stack><Fit w={32}>29°C</Fit><Muted><Fit w={95}>Mostly cloudy</Fit></Muted></Stack>
      </Weather>
      <svg width="29" height="29" viewBox="0 0 29 29"><path d="M0 0h13.800v13.800H0zM15.200 0H29v13.800H15.200zM0 15.200h13.800V29H0zM15.200 15.200H29V29H15.200z" fill="url(#win)" /></svg>
      <Search>
        <Ic w={18} h={19} c="#e6e6e6" s={2.2}><circle cx="7.500" cy="7.800" r="6.300" fill="#555" /><path d="M12 12.500l5.500 5.500" /></Ic>
        <Fit w={51}>Search</Fit>
      </Search>
      {apps.map((a, i) => (
        <AppCell key={i} $active={a.active}>
          {a.icon}
          {a.badge && <Bubble $x={29} $y={3} $c="#ff4fc8">1</Bubble>}
          {a.run && <Running $active={a.active} />}
        </AppCell>
      ))}
      <Gap $w={43} />
      <Ic w={15} h={9} c="#fff" s={2}><path d="M1 8l6.500-6.500L14 8" /></Ic><Gap $w={27} />
      <Stack $align="center"><Fit w={29}>ENG</Fit><Fit w={15}>IN</Fit></Stack><Gap $w={22} />
      <Ic w={21} h={16} c="#fff" s={1.6}><path d="M1 6.500a13.500 13.500 0 0 1 19 0M4 9.500a9.300 9.300 0 0 1 13 0M7 12.500a5 5 0 0 1 7 0" /><circle cx="10.500" cy="14.200" r="1.200" fill="#fff" /></Ic><Gap $w={9} />
      <Ic w={19} h={14} c="#fff"><path d="M.8 4.500h2.700L8 1v12L3.500 9.500H.8zM12.500 4.500l6 5.500M18.500 4.500l-6 5.500" strokeLinejoin="round" /></Ic><Gap $w={11} />
      <Ic w={21} h={14} c="#fff"><rect x=".8" y=".8" width="16.400" height="12" rx="2.500" /><rect x="3" y="3" width="12" height="7.600" rx="1" fill="#fff" stroke="none" /><path d="M19 4.500v4.500" strokeWidth="2" /></Ic><Gap $w={20} />
      <Stack $align="flex-end"><Fit w={63}>09:25 AM</Fit><Fit w={61}>02-11-23</Fit></Stack>
    </Taskbar>
  );
}

export default function App() {
  return (
    <Screen>
      <Global />
      <Gradients />
      <TopBar />
      <Menu />
      <Ribbon />
      <Workspace>
        <Rail>{leftRail.map(([top, icon], i) => <RailItem key={i} $top={top}>{icon}</RailItem>)}</Rail>
        <Rail>{rightRail.map(([top, icon], i) => <RailItem key={i} $top={top}>{icon}</RailItem>)}</Rail>
        <Viewer>
          <Banner>
            <Hex w={17} h={20} /><Gap $w={15} /><Fit w={501}>Unlock 80+ Pro benefits, including unlimited PDF editing and all AI features.</Fit>
            <Gap $w={72} /><BannerButton><Fit w={97}>Upgrade Now</Fit></BannerButton>
            <Grow /><Ic w={14} h={14} s={1.6} c="#2a2a2a"><path d="M.5.5l13 13M13.500.5l-13 13" /></Ic><Gap $w={21} />
          </Banner>
          <Page>
            <OuterFrame>
              <InnerFrame>
                <Diagram />
                <Caption><Fit w={715.5}>Fig.5. CLASS DIAGRAM FOR PASSPORT AUTOMATION SYSTEM</Fit></Caption>
              </InnerFrame>
            </OuterFrame>
          </Page>
          <NextPage />
        </Viewer>
        <ScrollTrack>
          <svg width="8" height="6"><path d="M4 0l4 6H0z" fill="#7a7a7a" /></svg>
          <Thumb />
          <svg width="8" height="6"><path d="M4 6l4-6H0z" fill="#7a7a7a" /></svg>
        </ScrollTrack>
      </Workspace>
      <StatusBar />
      <Bar />
    </Screen>
  );
}
